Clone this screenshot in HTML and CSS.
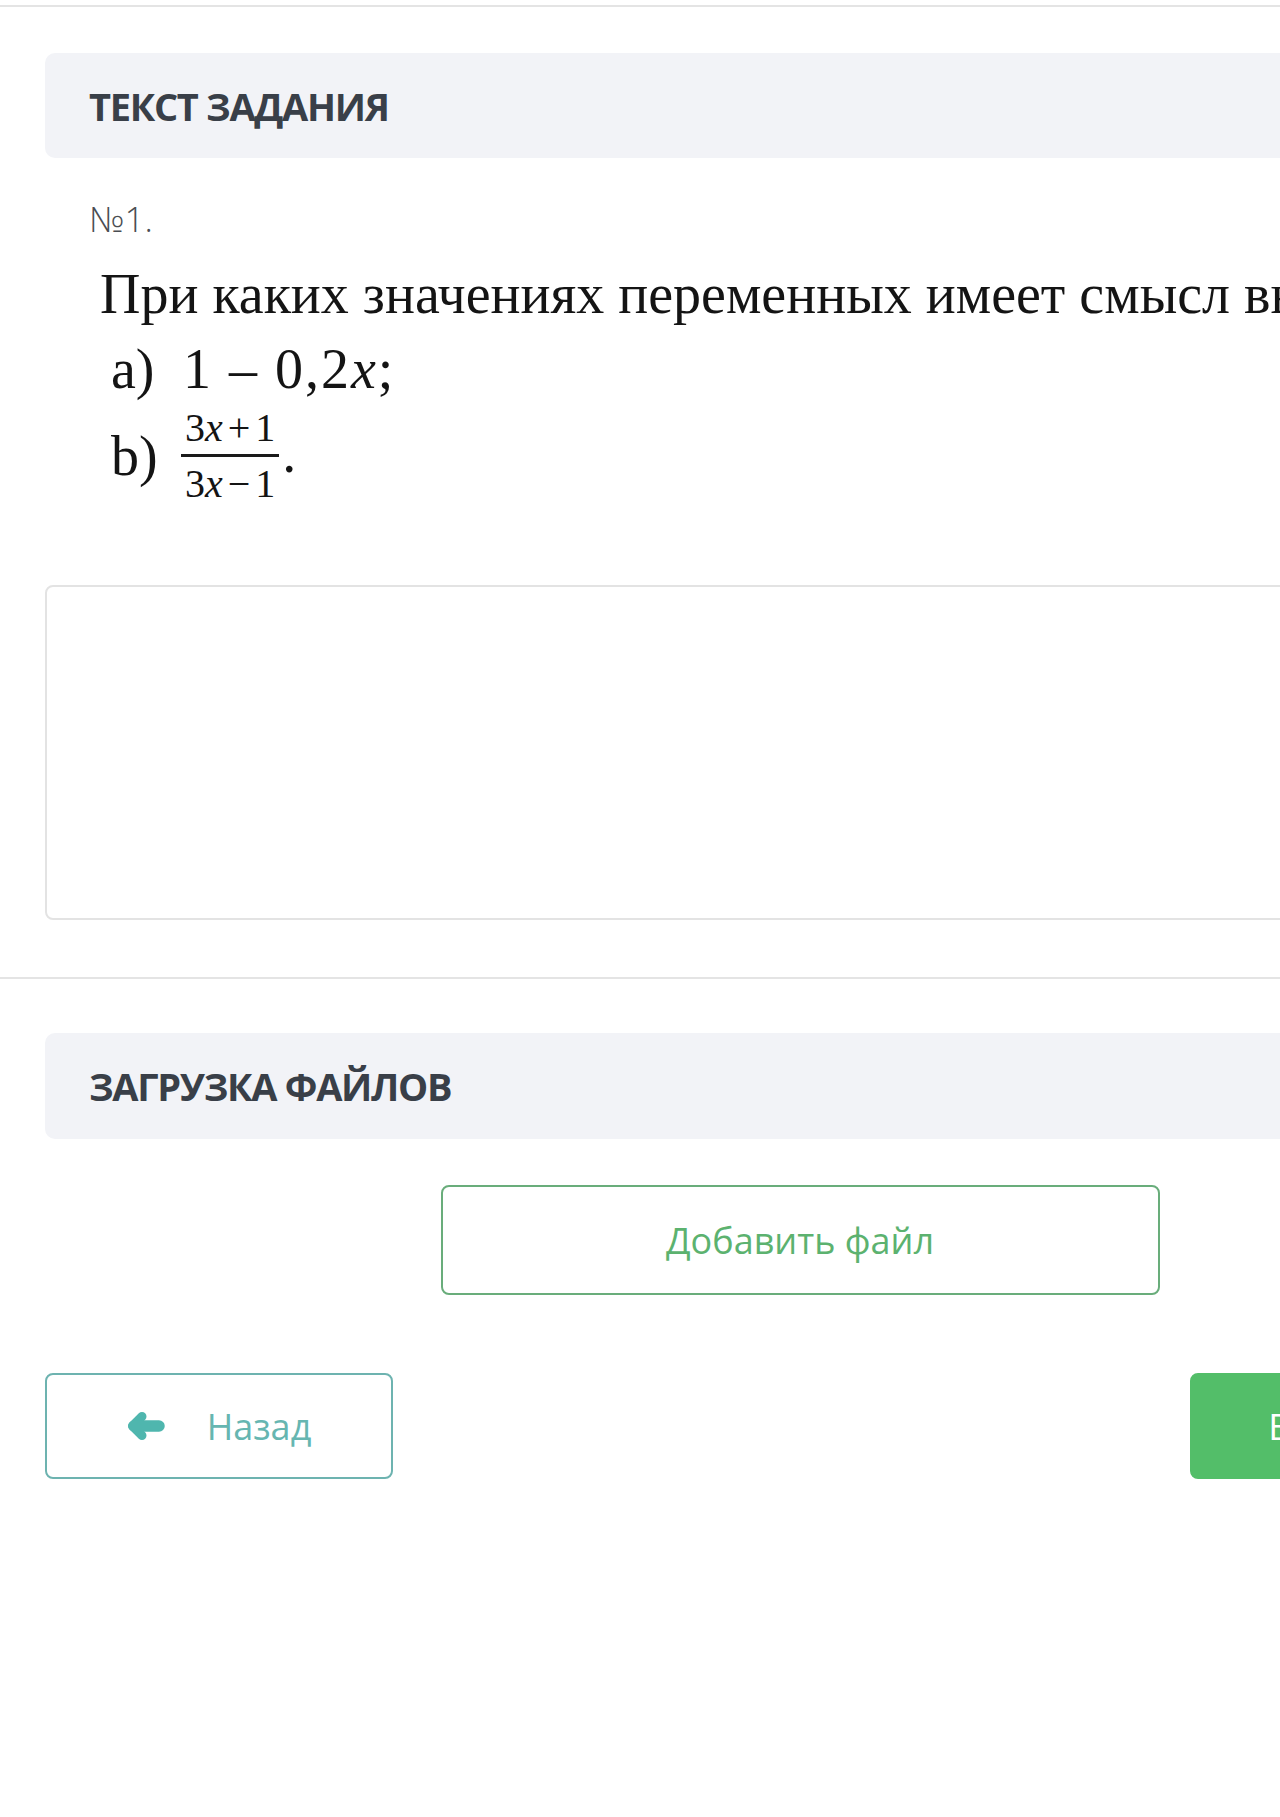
FILE: index.html
```html
<!DOCTYPE html>
<html lang="ru">
<head>
<meta charset="utf-8">
<title>Текст задания</title>
<link rel="stylesheet" href="styles.css">
</head>
<body>
<div class="page">
  <div class="top-rule"></div>
  <div class="content">
    <div class="section-head section-head--first">
      <h2 class="section-title">ТЕКСТ ЗАДАНИЯ</h2>
    </div>
    <p class="task-num">№1.</p>
    <div class="problem">
      <p class="problem-line">При каких значениях переменных имеет смысл выражение:</p>
      <div class="item item-a">
        <span class="label">a)</span>
        <span class="math">1 – 0,2<i class="var">x</i>;</span>
      </div>
      <div class="item item-b">
        <span class="label">b)</span>
        <span class="frac">
          <span class="frac-body">
            <span class="num">3<i class="var">x</i><span class="op">+</span>1</span>
            <span class="den">3<i class="var">x</i><span class="op">−</span>1</span>
          </span>
          <span class="frac-dot">.</span>
        </span>
      </div>
    </div>
    <div class="answer-box"></div>
  </div>
  <div class="rule"></div>
  <div class="content">
    <div class="section-head section-head--second">
      <h2 class="section-title">ЗАГРУЗКА ФАЙЛОВ</h2>
    </div>
    <div class="upload-row">
      <button class="btn btn-upload" type="button">Добавить файл</button>
    </div>
    <div class="nav-row">
      <button class="btn btn-back" type="button">
        <svg class="arrow" viewBox="0 0 38 30" aria-hidden="true"><path d="M15 5.5 L5.5 15 L15 24.5" fill="none" stroke-width="9" stroke-linecap="round" stroke-linejoin="round"/><path d="M7 15 H32" fill="none" stroke-width="11.5" stroke-linecap="round"/></svg>
        <span>Назад</span>
      </button>
      <button class="btn btn-next" type="button">
        <span>Вперед</span>
        <svg class="arrow" viewBox="0 0 38 30" aria-hidden="true"><path d="M23 5.5 L32.5 15 L23 24.5" fill="none" stroke-width="9" stroke-linecap="round" stroke-linejoin="round"/><path d="M6 15 H31" fill="none" stroke-width="11.5" stroke-linecap="round"/></svg>
      </button>
    </div>
  </div>
</div>
</body>
</html>
```

FILE: styles.css
```css
* { box-sizing: border-box; }

html, body {
  margin: 0;
  padding: 0;
  background: #ffffff;
}

body {
  font-family: "Open Sans", "Liberation Sans", sans-serif;
  color: #393f48;
}

.page {
  width: 1280px;
  min-height: 1817px;
  overflow: hidden;
}

.top-rule {
  margin-top: 5px;
  height: 2px;
  background: #e4e4e4;
}

.content {
  width: 1510px;
  margin-left: 45px;
}

.section-head {
  height: 105px;
  background: #f2f3f7;
  border-radius: 10px;
  display: flex;
  align-items: center;
  padding-left: 44px;
}

.section-head--first { margin-top: 46px; }
.section-head--second { margin-top: 54px; height: 106px; }

.section-title {
  margin: 0;
  font-size: 38px;
  font-weight: 700;
  line-height: 1;
  letter-spacing: -1.3px;
  color: #393f48;
}

.task-num {
  margin: 40px 0 0 44px;
  font-size: 35px;
  font-weight: 300;
  line-height: 42px;
  color: #4a4d52;
}

.problem {
  margin: 21px 0 0 55px;
  font-family: "Liberation Serif", "Times New Roman", serif;
  font-size: 56px;
  line-height: 66px;
  color: #141414;
}

.problem-line {
  margin: 0;
  white-space: nowrap;
}

.item {
  display: flex;
  align-items: center;
}

.item-a { margin-top: 9px; }
.item-b { margin-top: 6px; }

.label {
  width: 72px;
  margin-left: 11px;
  flex: none;
}

.math {
  letter-spacing: 2px;
  white-space: nowrap;
}

.var {
  font-style: italic;
}

.frac {
  display: inline-flex;
  align-items: flex-start;
  margin-left: -2px;
}

.frac-body {
  display: inline-flex;
  flex-direction: column;
  align-items: center;
  font-size: 40px;
  line-height: 40px;
}

.num {
  padding: 0 4px 6px;
  border-bottom: 3px solid #1a1a1a;
  white-space: nowrap;
}

.den {
  padding: 7px 4px 0;
  white-space: nowrap;
}

.op {
  margin: 0 5px;
}

.frac-dot {
  font-size: 56px;
  line-height: 56px;
  margin: 17px 0 0 3px;
}

.answer-box {
  margin-top: 81px;
  height: 335px;
  border: 2px solid #e3e3e3;
  border-radius: 8px;
  background: #ffffff;
}

.rule {
  margin-top: 57px;
  height: 2px;
  background: #e4e4e4;
}

.btn {
  font-family: "Open Sans", "Liberation Sans", sans-serif;
  font-size: 36px;
  font-weight: 400;
  background: #ffffff;
  border-radius: 8px;
  display: flex;
  align-items: center;
  justify-content: center;
  gap: 42px;
  padding: 0;
  cursor: pointer;
}

.upload-row {
  margin-top: 46px;
  display: flex;
  justify-content: center;
}

.btn-upload {
  width: 719px;
  height: 110px;
  border: 2px solid #69ad7b;
  color: #5cb26f;
}

.nav-row {
  margin-top: 78px;
  display: flex;
  justify-content: space-between;
}

.btn-back {
  width: 348px;
  height: 106px;
  border: 2px solid #6db3b0;
  color: #66b6b1;
}

.btn-next {
  width: 365px;
  height: 106px;
  border: 2px solid #53be69;
  background: #53be69;
  color: #ffffff;
}

.arrow {
  width: 38px;
  height: 30px;
  stroke: currentColor;
  flex: none;
}

.btn-back .arrow { stroke: #4fb6ae; }
```
